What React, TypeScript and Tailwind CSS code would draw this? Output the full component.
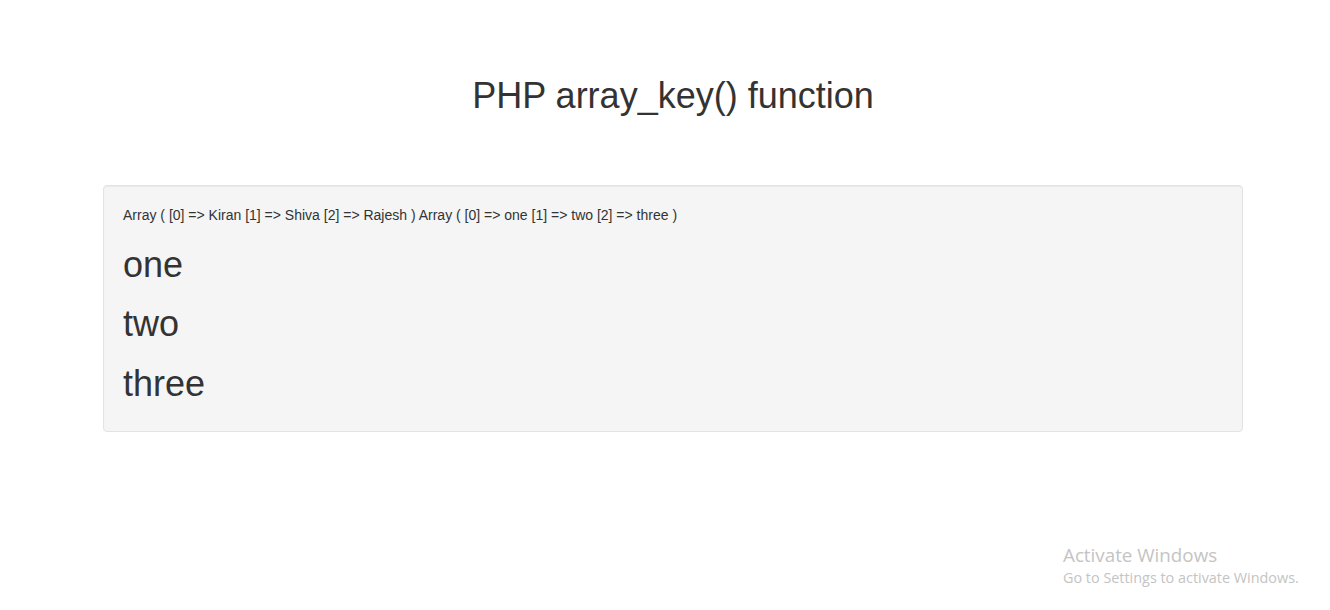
export default function App() {
  const values = ["one", "two", "three"];

  return (
    <div className="relative min-h-[610px] bg-white font-['Liberation_Sans',Arial,sans-serif] text-[14px] leading-[20px] text-[#333]">
      <div className="ml-[88px] w-[1170px] px-[15px]">
        <h1 className="mb-[69px] pt-[76px] text-center text-[36px] leading-[1.1]">
          PHP array_key() function
        </h1>

        {/* Bootstrap-style well */}
        <div className="min-h-[20px] rounded-[4px] border border-[#e3e3e3] bg-[#f5f5f5] p-[19px] shadow-[inset_0_1px_1px_rgba(0,0,0,0.05)]">
          <p className="mb-[20px]">
            Array ( [0] =&gt; Kiran [1] =&gt; Shiva [2] =&gt; Rajesh ) Array ( [0] =&gt; one [1] =&gt; two [2] =&gt; three )
          </p>
          <div className="flex flex-col gap-[20px]">
            {values.map((v) => (
              <h1 key={v} className="text-[36px] leading-[1.1]">
                {v}
              </h1>
            ))}
          </div>
          <div className="h-[9px]" />
        </div>
      </div>

      {/* Windows activation watermark */}
      <div className="pointer-events-none absolute left-[1063px] top-[543px] font-['Open_Sans','Noto_Sans',sans-serif] text-[#c4c4c4]">
        <div className="text-[18.8px] leading-[25px]">Activate Windows</div>
        <div className="text-[14.4px] leading-[20px]">Go to Settings to activate Windows.</div>
      </div>
    </div>
  );
}
